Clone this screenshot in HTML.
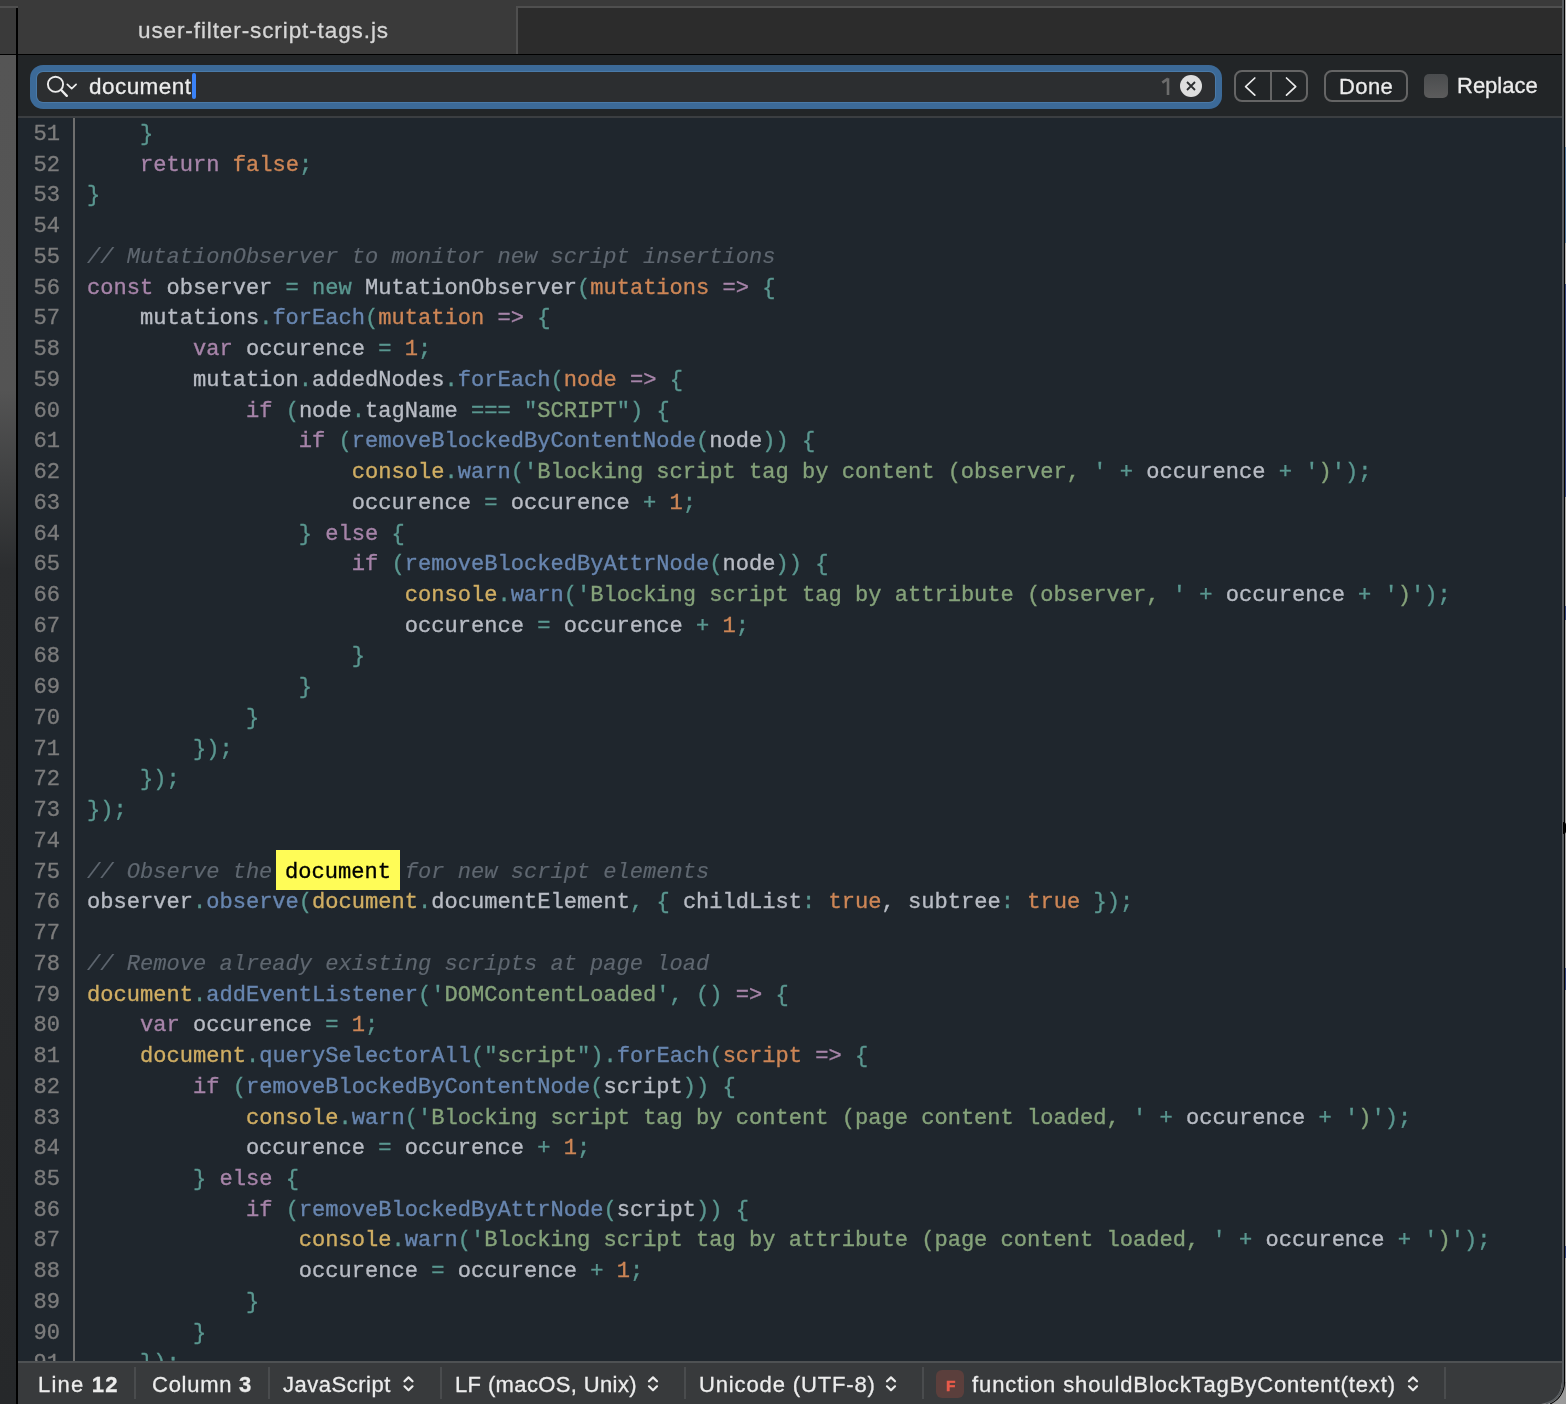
<!DOCTYPE html>
<html><head><meta charset="utf-8"><style>
*{margin:0;padding:0;box-sizing:border-box}
html,body{width:1566px;height:1404px;overflow:hidden;background:#b8b8b8}
body{position:relative;font-family:"Liberation Sans",sans-serif}
.abs,.t,.st{will-change:transform}
#src,#nums,#hltext{-webkit-text-stroke:0.35px currentColor}
#src .c{-webkit-text-stroke:0.15px currentColor}
.t,.st,#tabtitle{-webkit-text-stroke:0.3px currentColor}
.abs{position:absolute}
#leftstrip{left:0;top:55px;width:16px;height:1349px;background:linear-gradient(#555555 0px,#545454 335px,#2b2d2f 515px,#26282a 1349px)}
#lefttab{left:0;top:0;width:16px;height:55px;background:#3d3d3d}
#vline{left:16px;top:8px;width:2px;height:1396px;background:#000}
#tabbar{left:0;top:0;width:1562px;height:54px;background:#3a3a3a}
#toplineL{left:0;top:6px;width:18px;height:2px;background:#4f4f4f}
#inact{left:516px;top:6px;width:1046px;height:48px;background:#2c2c2c;border-left:2px solid #4f4f4f;border-top:2px solid #4f4f4f}
#tabtitle{left:138px;top:18px;font-size:22.5px;color:#d6d6d6;white-space:nowrap;letter-spacing:0.9px}
#blk{left:0;top:54px;width:1562px;height:1px;background:#000}
#findbar{left:18px;top:55px;width:1544px;height:61px;background:#222527}
#findline{left:18px;top:116px;width:1544px;height:2px;background:#3b3e41}
#ring{left:30px;top:65px;width:1192px;height:44px;border-radius:13px;background:#3c6a98}
#field{left:37px;top:72px;width:1178px;height:30px;border-radius:6px;background:#2c2e30;box-shadow:0 0 0 1px #4a7aa8}
#code{left:18px;top:118px;width:1544px;height:1244px;background:#1f262d;overflow:hidden}
#gline{left:73px;top:118px;width:2px;height:1244px;background:#6e6e6e}
#nums{left:18px;top:119.757px;width:42px;text-align:right;font-family:"Liberation Mono",monospace;font-size:22.07px;line-height:30.74px;color:#7c7c7c}
#src{left:86.5px;top:119.757px;font-family:"Liberation Mono",monospace;font-size:22.07px;line-height:30.74px;color:#b8bcc4;white-space:pre}
#src div,#nums div{height:30.74px}
i{font-style:normal}
.k{color:#a784a9} .p{color:#5a9790} .f{color:#6886b0} .o{color:#cd8656} .y{color:#d0ae63} .s{color:#85a27a} .c{color:#5f6770;font-style:italic} .w{color:#b8bcc4}
#hl{left:276px;top:849.7px;width:124px;height:40.3px;background:#fffc57}
#hltext{left:285.1px;top:857.517px;font-family:"Liberation Mono",monospace;font-size:22.07px;line-height:30.74px;color:#000;white-space:pre}
#status{left:18px;top:1361px;width:1544px;height:43px;background:#383a3c;border-top:2px solid #4e5153;border-bottom-right-radius:21px 22px}
.st{top:1371px;font-size:22px;color:#e8e8e8;white-space:nowrap}
.sep{top:1367px;width:2px;height:32px;background:#46484a}

.t{position:absolute;line-height:1;white-space:nowrap}
#stext{left:88.5px;top:76px;font-size:22.5px;color:#ececec;letter-spacing:0.45px}
#caret{left:191.5px;top:73px;width:3.5px;height:26px;border-radius:2px;background:#3a82f7}
#cnt{left:1161px;top:77px;font-size:22px;color:#6e6e6e}
#navbox{left:1234px;top:70px;width:74px;height:32px;border:2px solid #656565;border-radius:8px}
#navdiv{left:1270px;top:70px;width:2px;height:32px;background:#656565}
#donebtn{left:1324px;top:70px;width:84px;height:32px;border:2px solid #656565;border-radius:8px}
#donet{left:1338.8px;top:75.6px;font-size:22px;color:#ececec;letter-spacing:0.4px}
#chk{left:1424px;top:74px;width:24px;height:24px;border-radius:5px;background:linear-gradient(#4a4c4e,#5c5c5c)}
#rept{left:1457px;top:75.3px;font-size:22px;color:#ececec}
.st{position:absolute;top:1374px;font-size:22px;line-height:1;color:#ececec;white-space:nowrap}
.sep{position:absolute;top:1367px;width:1.5px;height:32px;background:#4a4c4e}
#fbadge{left:936px;top:1370px;width:28px;height:28px;border-radius:6px;background:#5b3f3c}
#fbl{left:946px;top:1377.6px;font-size:15.5px;font-weight:bold;color:#ea5a4a;-webkit-text-stroke:0.5px currentColor}
#rborder{left:1562px;top:0;width:2px;height:1382px;background:#565a5d}
#rblack{left:1564px;top:0;width:1px;height:1382px;background:#000}
#rdesk{left:1565px;top:0;width:1px;height:1404px;background:linear-gradient(#b4b4b4 0,#b4b4b4 147px,#5a7da0 147px,#5a7da0 243px,#b0b0b0 243px,#b0b0b0 284px,#3a4a80 284px,#3a4a80 497px,#a8a8a8 497px,#a8a8a8 606px,#3a4a80 606px,#3a4a80 620px,#a8a8a8 620px,#a8a8a8 968px,#3a4a80 968px,#3a4a80 990px,#a8a8a8 990px,#a8a8a8 1246px,#3a4a80 1246px,#3a4a80 1258px,#a8a8a8 1258px)}
</style></head><body>
<div class="abs" id="lefttab"></div>
<div class="abs" id="leftstrip"></div>
<div class="abs" id="tabbar"></div>
<div class="abs" id="toplineL"></div>
<div class="abs" id="inact"></div>
<div class="abs" id="tabtitle">user-filter-script-tags.js</div>
<div class="abs" id="blk"></div>
<div class="abs" id="findbar"></div>
<div class="abs" id="findline"></div>
<div class="abs" id="ring"></div>
<div class="abs" id="field"></div>
<div class="abs" id="code"></div>
<div class="abs" id="gline"></div>
<div class="abs" id="nums"><div>51</div><div>52</div><div>53</div><div>54</div><div>55</div><div>56</div><div>57</div><div>58</div><div>59</div><div>60</div><div>61</div><div>62</div><div>63</div><div>64</div><div>65</div><div>66</div><div>67</div><div>68</div><div>69</div><div>70</div><div>71</div><div>72</div><div>73</div><div>74</div><div>75</div><div>76</div><div>77</div><div>78</div><div>79</div><div>80</div><div>81</div><div>82</div><div>83</div><div>84</div><div>85</div><div>86</div><div>87</div><div>88</div><div>89</div><div>90</div><div>91</div></div>
<div class="abs" id="src"><div>    <i class="p">}</i></div><div>    <i class="k">return</i> <i class="o">false</i><i class="p">;</i></div><div><i class="p">}</i></div><div></div><div><i class="c">// MutationObserver to monitor new script insertions</i></div><div><i class="k">const</i> observer <i class="p">=</i> <i class="p">new</i> MutationObserver<i class="p">(</i><i class="o">mutations</i> <i class="k">=&gt;</i> <i class="p">{</i></div><div>    mutations<i class="p">.</i><i class="f">forEach</i><i class="p">(</i><i class="o">mutation</i> <i class="k">=&gt;</i> <i class="p">{</i></div><div>        <i class="k">var</i> occurence <i class="p">=</i> <i class="o">1</i><i class="p">;</i></div><div>        mutation<i class="p">.</i>addedNodes<i class="p">.</i><i class="f">forEach</i><i class="p">(</i><i class="o">node</i> <i class="k">=&gt;</i> <i class="p">{</i></div><div>            <i class="k">if</i> <i class="p">(</i>node<i class="p">.</i>tagName <i class="p">===</i> <i class="p">"</i><i class="s">SCRIPT</i><i class="p">"</i><i class="p">)</i> <i class="p">{</i></div><div>                <i class="k">if</i> <i class="p">(</i><i class="f">removeBlockedByContentNode</i><i class="p">(</i><i class="w">node</i><i class="p">)</i><i class="p">)</i> <i class="p">{</i></div><div>                    <i class="y">console</i><i class="p">.</i><i class="f">warn</i><i class="p">(</i><i class="p">'</i><i class="s">Blocking script tag by content (observer, </i><i class="p">'</i> <i class="p">+</i> occurence <i class="p">+</i> <i class="p">'</i><i class="s">)</i><i class="p">'</i><i class="p">)</i><i class="p">;</i></div><div>                    occurence <i class="p">=</i> occurence <i class="p">+</i> <i class="o">1</i><i class="p">;</i></div><div>                <i class="p">}</i> <i class="k">else</i> <i class="p">{</i></div><div>                    <i class="k">if</i> <i class="p">(</i><i class="f">removeBlockedByAttrNode</i><i class="p">(</i><i class="w">node</i><i class="p">)</i><i class="p">)</i> <i class="p">{</i></div><div>                        <i class="y">console</i><i class="p">.</i><i class="f">warn</i><i class="p">(</i><i class="p">'</i><i class="s">Blocking script tag by attribute (observer, </i><i class="p">'</i> <i class="p">+</i> occurence <i class="p">+</i> <i class="p">'</i><i class="s">)</i><i class="p">'</i><i class="p">)</i><i class="p">;</i></div><div>                        occurence <i class="p">=</i> occurence <i class="p">+</i> <i class="o">1</i><i class="p">;</i></div><div>                    <i class="p">}</i></div><div>                <i class="p">}</i></div><div>            <i class="p">}</i></div><div>        <i class="p">}</i><i class="p">)</i><i class="p">;</i></div><div>    <i class="p">}</i><i class="p">)</i><i class="p">;</i></div><div><i class="p">}</i><i class="p">)</i><i class="p">;</i></div><div></div><div><i class="c">// Observe the document for new script elements</i></div><div>observer<i class="p">.</i><i class="f">observe</i><i class="p">(</i><i class="y">document</i><i class="p">.</i>documentElement<i class="p">,</i> <i class="p">{</i> childList<i class="p">:</i> <i class="o">true</i>, subtree<i class="p">:</i> <i class="o">true</i> <i class="p">}</i><i class="p">)</i><i class="p">;</i></div><div></div><div><i class="c">// Remove already existing scripts at page load</i></div><div><i class="y">document</i><i class="p">.</i><i class="f">addEventListener</i><i class="p">(</i><i class="p">'</i><i class="s">DOMContentLoaded</i><i class="p">'</i><i class="p">,</i> <i class="p">(</i><i class="p">)</i> <i class="k">=&gt;</i> <i class="p">{</i></div><div>    <i class="k">var</i> occurence <i class="p">=</i> <i class="o">1</i><i class="p">;</i></div><div>    <i class="y">document</i><i class="p">.</i><i class="f">querySelectorAll</i><i class="p">(</i><i class="p">"</i><i class="s">script</i><i class="p">"</i><i class="p">)</i><i class="p">.</i><i class="f">forEach</i><i class="p">(</i><i class="o">script</i> <i class="k">=&gt;</i> <i class="p">{</i></div><div>        <i class="k">if</i> <i class="p">(</i><i class="f">removeBlockedByContentNode</i><i class="p">(</i><i class="w">script</i><i class="p">)</i><i class="p">)</i> <i class="p">{</i></div><div>            <i class="y">console</i><i class="p">.</i><i class="f">warn</i><i class="p">(</i><i class="p">'</i><i class="s">Blocking script tag by content (page content loaded, </i><i class="p">'</i> <i class="p">+</i> occurence <i class="p">+</i> <i class="p">'</i><i class="s">)</i><i class="p">'</i><i class="p">)</i><i class="p">;</i></div><div>            occurence <i class="p">=</i> occurence <i class="p">+</i> <i class="o">1</i><i class="p">;</i></div><div>        <i class="p">}</i> <i class="k">else</i> <i class="p">{</i></div><div>            <i class="k">if</i> <i class="p">(</i><i class="f">removeBlockedByAttrNode</i><i class="p">(</i><i class="w">script</i><i class="p">)</i><i class="p">)</i> <i class="p">{</i></div><div>                <i class="y">console</i><i class="p">.</i><i class="f">warn</i><i class="p">(</i><i class="p">'</i><i class="s">Blocking script tag by attribute (page content loaded, </i><i class="p">'</i> <i class="p">+</i> occurence <i class="p">+</i> <i class="p">'</i><i class="s">)</i><i class="p">'</i><i class="p">)</i><i class="p">;</i></div><div>                occurence <i class="p">=</i> occurence <i class="p">+</i> <i class="o">1</i><i class="p">;</i></div><div>            <i class="p">}</i></div><div>        <i class="p">}</i></div><div>    <i class="p">}</i><i class="p">)</i><i class="p">;</i></div></div>
<div class="abs" id="hl"></div>
<div class="abs" id="hltext">document</div>
<div class="abs" id="status"></div>

<svg class="abs" style="left:0;top:0" width="1566" height="1404" viewBox="0 0 1566 1404">
<g fill="none" stroke="#ececec" stroke-linecap="round" stroke-linejoin="round">
<circle cx="55.5" cy="84.3" r="7.6" stroke-width="1.9"/>
<path d="M61.2 90 L66.8 95.8" stroke-width="2.4"/>
<path d="M67.3 84.3 L71.7 88.7 L76.1 84.3" stroke-width="1.7"/>
<path d="M1254.8 78 L1245.6 86.6 L1254.8 95.2" stroke-width="1.7"/>
<path d="M1286.5 78 L1295.7 86.6 L1286.5 95.2" stroke-width="1.7"/>
</g>
<path d="M1168 78.2 L1168 95 M1168 78.6 L1162.3 82.6" stroke="#6c6c6c" stroke-width="2.6" fill="none" stroke-linejoin="round"/>
<circle cx="1191" cy="86" r="11" fill="#dedede"/>
<path d="M1187 82 L1195 90 M1195 82 L1187 90" stroke="#2a2c2e" stroke-width="1.8" stroke-linecap="butt"/>
<g fill="none" stroke="#ececec" stroke-width="2.2" stroke-linecap="round" stroke-linejoin="round">
<path d="M404.5 1381.3 L408.5 1377.4 L412.5 1381.3 M404.5 1386.3 L408.5 1390.2 L412.5 1386.3"/>
<path d="M649 1381.3 L653 1377.4 L657 1381.3 M649 1386.3 L653 1390.2 L657 1386.3"/>
<path d="M887 1381.3 L891 1377.4 L895 1381.3 M887 1386.3 L891 1390.2 L895 1386.3"/>
<path d="M1409 1381.3 L1413 1377.4 L1417 1381.3 M1409 1386.3 L1413 1390.2 L1417 1386.3"/>
</g>
</svg>
<div class="t" id="stext">document</div>
<div class="abs" id="caret"></div>

<div class="abs" id="navbox"></div>
<div class="abs" id="navdiv"></div>
<div class="abs" id="donebtn"></div>
<div class="t" id="donet">Done</div>
<div class="abs" id="chk"></div>
<div class="t" id="rept">Replace</div>
<div class="st" style="left:38px;letter-spacing:1.2px">Line <b>12</b></div>
<div class="sep" style="left:134px"></div>
<div class="st" style="left:152px;letter-spacing:0.74px">Column <b>3</b></div>
<div class="sep" style="left:268px"></div>
<div class="st" style="left:283px;letter-spacing:0.52px">JavaScript</div>
<div class="sep" style="left:440px"></div>
<div class="st" style="left:455px;letter-spacing:0.37px">LF (macOS, Unix)</div>
<div class="sep" style="left:684px"></div>
<div class="st" style="left:699px;letter-spacing:0.86px">Unicode (UTF-8)</div>
<div class="sep" style="left:922px"></div>
<div class="abs" id="fbadge"></div>
<div class="t" id="fbl">F</div>
<div class="st" style="left:972px;letter-spacing:0.89px">function shouldBlockTagByContent(text)</div>
<div class="sep" style="left:1444px"></div>
<div class="abs" id="vline"></div>
<div class="abs" id="rborder"></div>
<div class="abs" id="rblack"></div>
<div class="abs" id="rdesk"></div>
<div class="abs" style="left:1563px;top:822px;width:3px;height:12px;background:#000;border-radius:0 3px 3px 0"></div>
<svg class="abs" style="left:1520px;top:1360px" width="46" height="44" viewBox="1520 1360 46 44">
<path d="M1565.5 1382 L1566 1382 L1566 1404 L1551.78 1404 A24.5 24.5 0 0 0 1565.5 1382 Z" fill="#9a9a9a"/>
<path d="M1563 1382 A22 22 0 0 1 1548 1404 L1566 1404 L1566 1382 Z" fill="none"/>
<path d="M1563 1382 A22 22 0 0 1 1545.5 1403.5" fill="none" stroke="#565a5d" stroke-width="2"/>
<path d="M1564.5 1382 A23.5 23.5 0 0 1 1550 1404" fill="none" stroke="#000" stroke-width="1.2"/>
</svg>
</body></html>
